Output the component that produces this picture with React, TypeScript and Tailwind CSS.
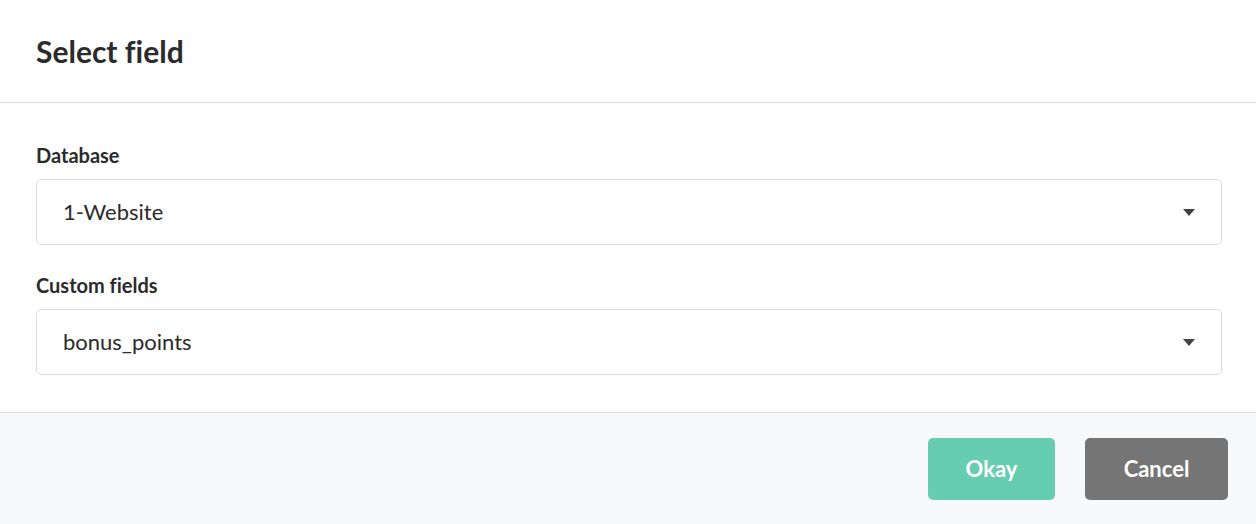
import { useState } from "react";

const font = { fontFamily: "Lato, 'Noto Sans', sans-serif" };

function Caret() {
  return (
    <svg width="12" height="7" viewBox="0 0 12 7" className="shrink-0">
      <path d="M0 0h12L6 7z" fill="#444" />
    </svg>
  );
}

function SelectBox({ value }: { value: string }) {
  return (
    <div className="flex h-[66px] items-center justify-between rounded-[5px] border border-[#dcdcdc] bg-white pl-[26px] pr-[26px]">
      <span className="text-[22px] leading-none text-[#2b2b2b]">{value}</span>
      <Caret />
    </div>
  );
}

export default function App() {
  const [db] = useState("1-Website");
  const [field] = useState("bonus_points");

  return (
    <div
      className="flex h-[524px] w-full flex-col bg-white [font-variant-ligatures:none]"
      style={font}
    >
      <div className="flex h-[103px] items-center border-b border-[#dedede] px-9">
        <h1 className="text-[30px] font-bold text-[#2b2b2b]">Select field</h1>
      </div>

      <div className="flex flex-col pl-9 pr-[34px] pt-[40px] pb-[37px]">
        <label className="mb-[12px] h-6 text-[20px] font-bold leading-6 text-[#2b2b2b]">
          Database
        </label>
        <SelectBox value={db} />
        <label className="mb-[12px] mt-[28px] h-6 text-[20px] font-bold leading-6 text-[#2b2b2b]">
          Custom fields
        </label>
        <SelectBox value={field} />
      </div>

      <div className="flex flex-1 items-center justify-end gap-[30px] border-t border-[#dedede] bg-[#f8f9fb] pr-[28px]">
        <button className="h-[62px] w-[127px] rounded-[5px] bg-[#66cdb0] text-[22px] font-bold text-white">
          Okay
        </button>
        <button className="h-[62px] w-[143px] rounded-[5px] bg-[#757575] text-[22px] font-bold text-white">
          Cancel
        </button>
      </div>
    </div>
  );
}
